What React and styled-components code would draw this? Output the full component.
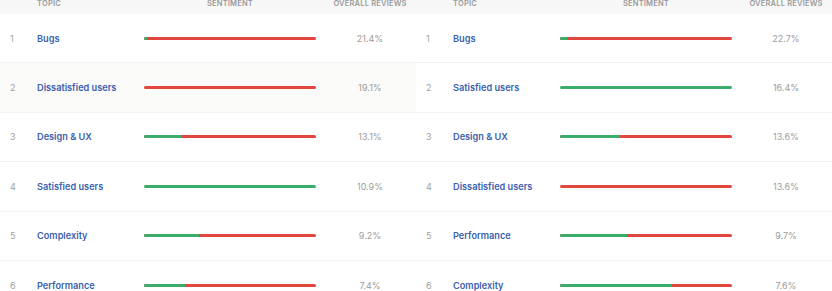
import React from 'react';
import styled, { createGlobalStyle } from 'styled-components';

const left = [
  { topic: 'Bugs', pos: 2, share: '21.4%' },
  { topic: 'Dissatisfied users', pos: 0, share: '19.1%', hover: true },
  { topic: 'Design & UX', pos: 22, share: '13.1%' },
  { topic: 'Satisfied users', pos: 100, share: '10.9%' },
  { topic: 'Complexity', pos: 32, share: '9.2%' },
  { topic: 'Performance', pos: 24, share: '7.4%' },
];

const right = [
  { topic: 'Bugs', pos: 4, share: '22.7%' },
  { topic: 'Satisfied users', pos: 100, share: '16.4%' },
  { topic: 'Design & UX', pos: 35, share: '13.6%' },
  { topic: 'Dissatisfied users', pos: 0, share: '13.6%' },
  { topic: 'Performance', pos: 39, share: '9.7%' },
  { topic: 'Complexity', pos: 65, share: '7.6%' },
];

function TopicTable({ rows }) {
  return (
    <Table>
      <HeadRow>
        <span />
        <HeadCell>Topic</HeadCell>
        <HeadCell $center>Sentiment</HeadCell>
        <HeadCell $center>Overall reviews</HeadCell>
      </HeadRow>
      {rows.map((r, i) => (
        <Row key={i} $hover={r.hover}>
          <Rank>{i + 1}</Rank>
          <Topic>{r.topic}</Topic>
          <BarCell>
            <Bar>
              <Positive style={{ width: `${r.pos}%` }} />
            </Bar>
          </BarCell>
          <Share>{r.share}</Share>
        </Row>
      ))}
    </Table>
  );
}

export default function App() {
  return (
    <>
      <Global />
      <Page>
        <TopicTable rows={left} />
        <TopicTable rows={right} />
      </Page>
    </>
  );
}

/* ===== styled ===== */
const Global = createGlobalStyle`
  body {
    margin: 0;
    background: #fff;
    font-family: Inter, "Noto Sans", sans-serif;
  }
`;

const Page = styled.div`
  width: 832px;
  height: 291px;
  overflow: hidden;
  display: grid;
  grid-template-columns: 416px 416px;
`;

const Table = styled.div`
  display: flex;
  flex-direction: column;
`;

const cols = `37px 99px 188px 92px`;

const HeadRow = styled.div`
  display: grid;
  grid-template-columns: ${cols};
  height: 14px;
  background: #f7f7f7;
  align-items: start;
`;

const HeadCell = styled.div`
  font-size: 7.5px;
  line-height: 8px;
  font-weight: 600;
  letter-spacing: 0.2px;
  text-transform: uppercase;
  color: #9a9a9a;
  text-align: ${(p) => (p.$center ? 'center' : 'left')};
`;

const Row = styled.div`
  display: grid;
  grid-template-columns: ${cols};
  align-items: center;
  height: 49.4px;
  box-sizing: border-box;
  border-bottom: 1px solid #f3f3f3;
  background: ${(p) => (p.$hover ? '#fafaf9' : '#fff')};
`;

const Rank = styled.div`
  padding-left: 10px;
  font-size: 9px;
  color: #a0a0a0;
`;

const Topic = styled.div`
  font-size: 9.2px;
  font-weight: 600;
  color: #3c5fae;
  white-space: nowrap;
`;

const BarCell = styled.div`
  display: flex;
  justify-content: center;
`;

const Bar = styled.div`
  width: 172px;
  height: 3px;
  border-radius: 2px;
  background: #e2473f;
  overflow: hidden;
  display: flex;
`;

const Positive = styled.div`
  height: 100%;
  background: #3aad6b;
`;

const Share = styled.div`
  text-align: center;
  font-size: 9px;
  color: #9c9c9c;
`;
